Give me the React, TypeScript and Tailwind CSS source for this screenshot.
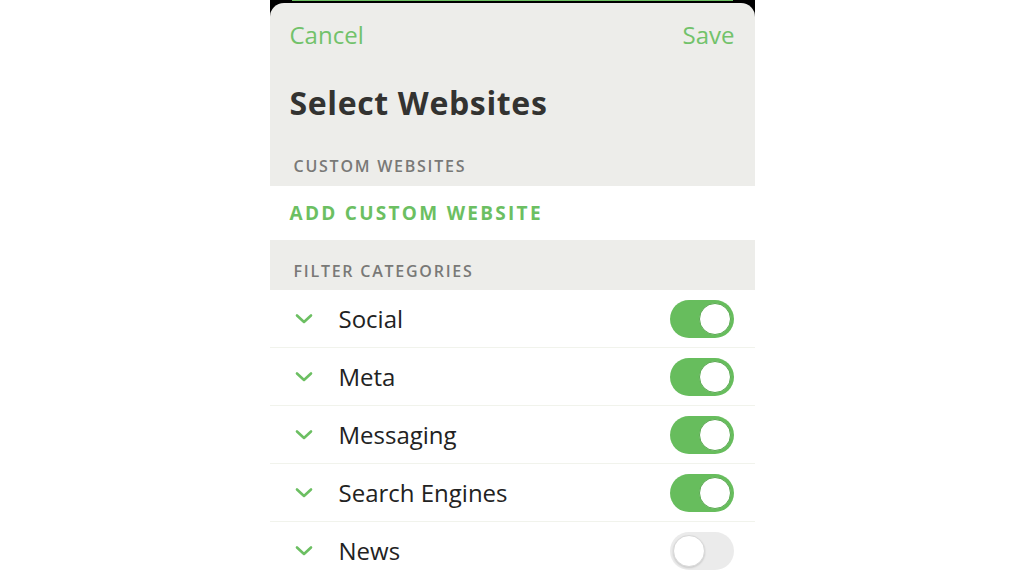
import { useState } from 'react';

type Category = { name: string; enabled: boolean };

const initialCategories: Category[] = [
  { name: 'Social', enabled: true },
  { name: 'Meta', enabled: true },
  { name: 'Messaging', enabled: true },
  { name: 'Search Engines', enabled: true },
  { name: 'News', enabled: false },
];

function Chevron() {
  return (
    <svg width="18" height="12" viewBox="0 0 18 12" fill="none">
      <path d="M2 2.5 L9 9 L16 2.5" stroke="#6cbf62" strokeWidth="2.6" strokeLinecap="round" strokeLinejoin="round" />
    </svg>
  );
}

function Toggle({ on, onClick }: { on: boolean; onClick: () => void }) {
  return (
    <button
      onClick={onClick}
      className={`w-[64px] h-[38px] rounded-full p-[3px] flex items-center shrink-0 ${
        on ? 'bg-[#67bd5d] justify-end' : 'bg-[#ebebeb] justify-start'
      }`}
    >
      <span
        className={`block w-[32px] h-[32px] rounded-full bg-white ${
          on ? 'border border-[#5aa851]' : 'border border-[#d8d8d8] shadow-[0_1px_2px_rgba(0,0,0,0.15)]'
        }`}
      />
    </button>
  );
}

export default function App() {
  const [categories, setCategories] = useState(initialCategories);

  const toggle = (i: number) =>
    setCategories((c) => c.map((cat, j) => (j === i ? { ...cat, enabled: !cat.enabled } : cat)));

  return (
    <div className="w-full h-[576px] bg-white overflow-hidden font-['Open_Sans','Noto_Sans',sans-serif]">
      <div className="w-[485px] h-full mx-auto bg-black flex flex-col">
        {/* top edge */}
        <div className="h-[3px] shrink-0 px-[22px]">
          <div className="h-[1px] bg-[#6cbf62]" />
        </div>

        <div className="flex-1 bg-[#ededea] rounded-t-[14px] flex flex-col overflow-hidden">
          {/* header */}
          <div className="flex items-center justify-between px-[20px] pt-[18px] h-[46px] text-[24px] leading-[28px] text-[#72c26a]">
            <span>Cancel</span>
            <span>Save</span>
          </div>

          <h1 className="px-[20px] mt-[36px] text-[32px] leading-[36px] font-bold tracking-[0.02em] text-[#333331]">
            Select Websites
          </h1>

          <div className="px-[24px] pt-[35px] pb-[10px] h-[65px] shrink-0 text-[16px] leading-[20px] tracking-[0.11em] font-semibold text-[#797977]">
            CUSTOM WEBSITES
          </div>

          <div className="bg-white h-[54px] shrink-0 px-[20px] flex items-center text-[19px] font-bold tracking-[0.12em] text-[#6cbf62]">
            ADD CUSTOM WEBSITE
          </div>

          <div className="px-[24px] pt-[21px] pb-[9px] h-[50px] shrink-0 text-[16px] leading-[20px] tracking-[0.11em] font-semibold text-[#797977]">
            FILTER CATEGORIES
          </div>

          <div className="bg-white flex-1 flex flex-col">
            {categories.map((cat, i) => (
              <div
                key={cat.name}
                className={`h-[58px] shrink-0 flex items-center pl-[25px] pr-[21px] ${
                  i < categories.length - 1 ? 'border-b border-[#f1f3ec]' : ''
                }`}
              >
                <Chevron />
                <span className="ml-[26px] flex-1 text-[24px] leading-[30px] text-[#222222]">{cat.name}</span>
                <Toggle on={cat.enabled} onClick={() => toggle(i)} />
              </div>
            ))}
          </div>
        </div>
      </div>
    </div>
  );
}
